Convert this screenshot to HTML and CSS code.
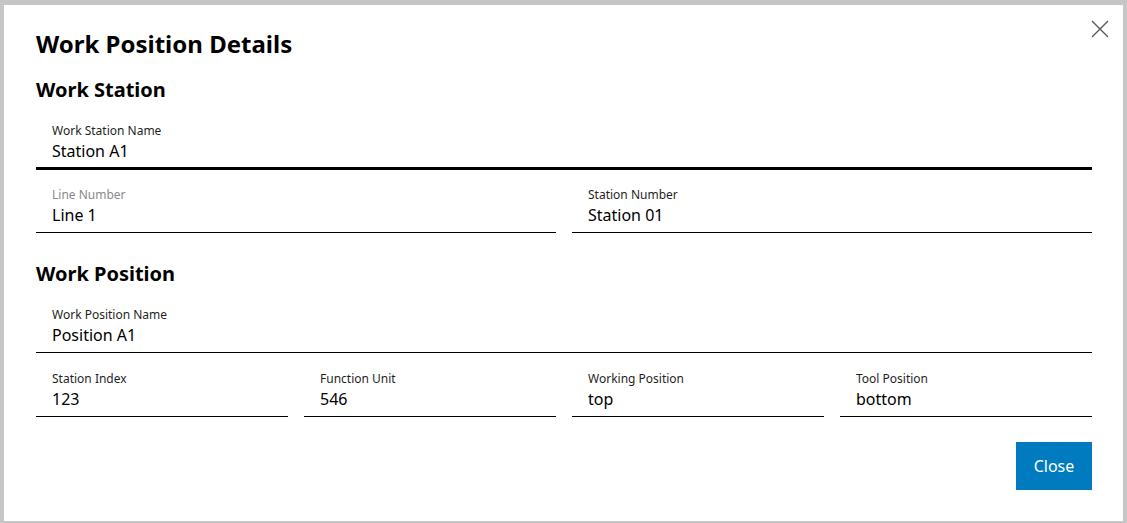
FILE: index.html
```html
<!DOCTYPE html>
<html lang="en">
<head>
<meta charset="utf-8">
<title>Work Position Details</title>
<link rel="stylesheet" href="styles.css">
</head>
<body>
<div class="backdrop">
  <div class="dialog" role="dialog" aria-labelledby="dlg-title">
    <button class="close-x" type="button" aria-label="Close">
      <svg width="18" height="18" viewBox="0 0 18 18"><path d="M1 1 L17 17 M17 1 L1 17" stroke="#595959" stroke-width="1.4" fill="none"/></svg>
    </button>
    <h1 class="title" id="dlg-title">Work Position Details</h1>

    <h2 class="section">Work Station</h2>
    <div class="field focused">
      <span class="label">Work Station Name</span>
      <span class="value">Station A1</span>
    </div>
    <div class="row two">
      <div class="field">
        <span class="label disabled">Line Number</span>
        <span class="value">Line 1</span>
      </div>
      <div class="field">
        <span class="label">Station Number</span>
        <span class="value">Station 01</span>
      </div>
    </div>

    <h2 class="section gap-top">Work Position</h2>
    <div class="field">
      <span class="label">Work Position Name</span>
      <span class="value">Position A1</span>
    </div>
    <div class="row four">
      <div class="field">
        <span class="label">Station Index</span>
        <span class="value">123</span>
      </div>
      <div class="field">
        <span class="label">Function Unit</span>
        <span class="value">546</span>
      </div>
      <div class="field">
        <span class="label">Working Position</span>
        <span class="value">top</span>
      </div>
      <div class="field">
        <span class="label">Tool Position</span>
        <span class="value">bottom</span>
      </div>
    </div>

    <div class="actions">
      <button class="btn-primary" type="button">Close</button>
    </div>
  </div>
</div>
</body>
</html>
```

FILE: styles.css
```css
* { box-sizing: border-box; }
html, body { margin: 0; padding: 0; }
body {
  width: 1127px;
  height: 523px;
  background: #c6c6c6;
  font-family: "Noto Sans", "Open Sans", "Liberation Sans", sans-serif;
  color: #000;
  overflow: hidden;
}
.backdrop {
  padding: 5px 4px 0 4px;
  height: 523px;
}
.dialog {
  position: relative;
  background: #fff;
  width: 1119px;
  height: 516px;
  padding: 23px 31px 0 32px;
  display: flex;
  flex-direction: column;
}
.close-x {
  position: absolute;
  top: 15px;
  right: 14px;
  width: 18px;
  height: 18px;
  padding: 0;
  border: 0;
  background: none;
  cursor: pointer;
}
.close-x svg { display: block; }
.title {
  margin: 0;
  font-size: 24px;
  line-height: 32px;
  font-weight: 700;
}
.section {
  margin: 16px 0 16px 0;
  font-size: 20px;
  line-height: 28px;
  font-weight: 700;
}
.section.gap-top { margin-top: 27px; }
.field {
  display: flex;
  flex-direction: column;
  height: 49px;
  padding: 3px 16px 0 16px;
  border-bottom: 1px solid #000;
}
.field.focused {
  height: 50px;
  border-bottom: 3px solid #000;
}
.label {
  font-size: 12px;
  line-height: 16px;
  color: #1f1f1f;
}
.label.disabled { color: #8a8a8a; }
.value {
  font-size: 16px;
  line-height: 24px;
  color: #000;
}
.row {
  display: grid;
  gap: 16px;
  margin-top: 14px;
}
.row.two { grid-template-columns: 1fr 1fr; }
.row.four { grid-template-columns: repeat(4, 1fr); margin-top: 15px; }
.actions {
  display: flex;
  justify-content: flex-end;
  margin-top: 25px;
}
.btn-primary {
  width: 76px;
  height: 48px;
  background: #007bc0;
  color: #fff;
  border: 0;
  font-family: inherit;
  font-size: 16px;
  padding: 0;
  cursor: pointer;
}
```
